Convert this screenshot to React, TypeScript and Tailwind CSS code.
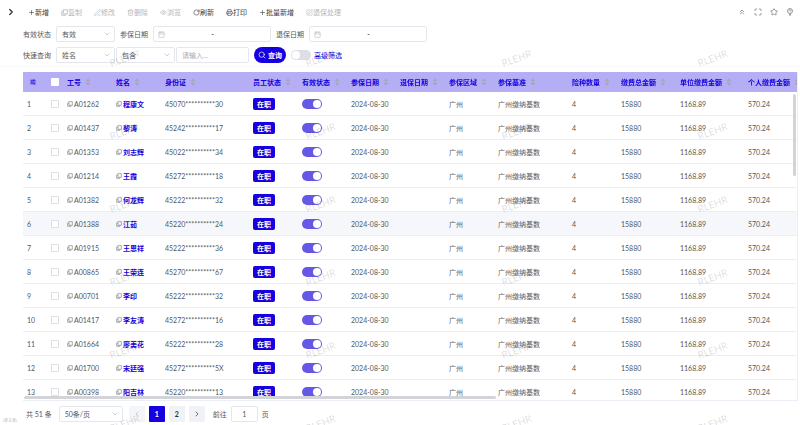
import type { ComponentType } from "react";
import {
  ChevronRight,
  ChevronLeft,
  ChevronDown,
  ChevronsUp,
  Plus,
  Trash2,
  Eye,
  RotateCw,
  Printer,
  SquarePen,
  PenLine,
  Search,
  Star,
  Calendar,
  Maximize,
  SlidersHorizontal,
} from "lucide-react";

type IconProps = { className?: string; strokeWidth?: number };

// overlapping squares, used in the toolbar and in the cells
function CopyIcon({ className }: IconProps) {
  return (
    <svg viewBox="0 0 14 14" fill="none" stroke="currentColor" strokeWidth="1.6" className={className}>
      <path d="M4.5 1.5h8v8.5h-8z" />
      <path d="M4.5 4.5h-3v8h7.5v-2.5" />
    </svg>
  );
}

// round bulb with a question mark on a short stem
function GuideIcon({ className }: IconProps) {
  return (
    <svg viewBox="0 0 16 16" fill="none" stroke="currentColor" strokeWidth="1.4" className={className}>
      <circle cx="8" cy="6" r="5" />
      <path d="M6.5 5a1.5 1.5 0 1 1 2.2 1.4c-.5.3-.7.6-.7 1.1M8 11v4.5M6.5 13.5h3" />
    </svg>
  );
}

const actions: { icon: ComponentType<IconProps>; label: string; disabled?: boolean }[] = [
  { icon: Plus, label: "新增" },
  { icon: CopyIcon, label: "复制", disabled: true },
  { icon: PenLine, label: "修改", disabled: true },
  { icon: Trash2, label: "删除", disabled: true },
  { icon: Eye, label: "浏览", disabled: true },
  { icon: RotateCw, label: "刷新" },
  { icon: Printer, label: "打印" },
  { icon: Plus, label: "批量新增" },
  { icon: SquarePen, label: "退保处理", disabled: true },
];

const tools = [
  { icon: ChevronsUp, label: "收起" },
  { icon: Maximize, label: "全屏" },
  { icon: Star, label: "收藏" },
  { icon: GuideIcon, label: "帮助" },
];

const columns = [
  { title: "工号", width: "w-[49px]" },
  { title: "姓名", width: "w-[49px]" },
  { title: "身份证", width: "w-[88px]" },
  { title: "员工状态", width: "w-[49px]" },
  { title: "有效状态", width: "w-[49px]" },
  { title: "参保日期", width: "w-[49px]" },
  { title: "退保日期", width: "w-[49px]" },
  { title: "参保区域", width: "w-[49px]" },
  { title: "参保基准", width: "w-[74px]" },
  { title: "险种数量", width: "w-[49px]" },
  { title: "缴费总金额", width: "w-[59px]" },
  { title: "单位缴费金额", width: "w-[68px]" },
  { title: "个人缴费金额", width: "w-[68px]" },
];

const employees = [
  { code: "A01262", name: "程康文", idCard: "45070**********30" },
  { code: "A01437", name: "黎涛", idCard: "45242**********17" },
  { code: "A01353", name: "刘志辉", idCard: "45022**********34" },
  { code: "A01214", name: "王霞", idCard: "45272**********18" },
  { code: "A01382", name: "何龙辉", idCard: "45222**********32" },
  { code: "A01388", name: "江茹", idCard: "45220**********24" },
  { code: "A01915", name: "王恩祥", idCard: "45222**********36" },
  { code: "A00865", name: "王荣连", idCard: "45270**********67" },
  { code: "A00701", name: "李印", idCard: "45222**********32" },
  { code: "A01417", name: "李友涛", idCard: "45272**********16" },
  { code: "A01664", name: "廖美花", idCard: "45222**********28" },
  { code: "A01700", name: "宋廷强", idCard: "45272**********5X" },
  { code: "A00398", name: "阳吉林", idCard: "45220**********13" },
];

function SelectBox({ id, label, value, width }: { id: string; label?: string; value: string; width: string }) {
  return (
    <div className={`relative h-4 ${width}`}>
      <select
        id={id}
        aria-label={label}
        defaultValue={value}
        className="block h-4 w-full appearance-none rounded-xs border border-[#e4e7ed] bg-white pl-[5px] text-[#55575c]"
      >
        <option>{value}</option>
      </select>
      <ChevronDown className="pointer-events-none absolute top-1 right-1 size-2 text-[#b4b8bf]" strokeWidth={2} />
    </div>
  );
}

function DateRange({ id, label }: { id: string; label: string }) {
  return (
    <div className="flex h-4 w-[118px] items-center rounded-xs border border-[#e4e7ed] bg-white px-1">
      <Calendar className="size-[7px] shrink-0 text-[#b4b8bf]" strokeWidth={2} />
      <input id={id} aria-label={`${label}起`} className="w-0 flex-1 outline-none" />
      <span className="mr-[6px] font-bold">-</span>
      <input aria-label={`${label}止`} className="w-0 flex-1 outline-none" />
    </div>
  );
}

function SortIcon() {
  return (
    <svg viewBox="0 0 6 8" className="h-2 w-[6px] shrink-0 fill-[#a3a5b4]">
      <path d="M3 .4 5.4 3.3H.6zM3 7.6.6 4.7h4.8z" />
    </svg>
  );
}

function Watermark() {
  return (
    <div
      aria-hidden="true"
      className="pointer-events-none absolute inset-0 grid auto-rows-[73px] grid-cols-[repeat(auto-fill,40px)] gap-x-[156px] overflow-hidden pt-[21px] pl-[105px]"
    >
      {Array.from({ length: 24 }, (_, i) => (
        <span key={i} className="grid place-items-center">
          <span className="-rotate-[20deg] text-[10px] text-black/15">RLEHR</span>
        </span>
      ))}
    </div>
  );
}

function Row({ index, code, name, idCard }: { index: number; code: string; name: string; idCard: string }) {
  return (
    <tr className={`h-6 ${index === 6 ? "bg-[#f5f7fa]" : "bg-white"} [&>td]:border-b [&>td]:border-[#ebeef5] [&>td]:px-1`}>
      <td>{index}</td>
      <td>
        <input
          type="checkbox"
          aria-label={`选择 ${name}`}
          className="block size-2 appearance-none rounded-[1px] border border-[#dcdfe6] bg-white"
        />
      </td>
      <td>
        <span className="flex items-center gap-px">
          <CopyIcon className="size-[6px] shrink-0 text-[#85878c]" />
          {code}
        </span>
      </td>
      <td>
        <a href="#" className="flex items-center gap-px font-bold text-[#1500e0]">
          <CopyIcon className="size-[6px] shrink-0 text-[#85878c]" />
          {name}
        </a>
      </td>
      <td>{idCard}</td>
      <td>
        <span className="flex h-3 w-[22px] items-center justify-center rounded-xs bg-[#1500e0] font-bold text-white">
          在职
        </span>
      </td>
      <td>
        <input
          type="checkbox"
          role="switch"
          defaultChecked
          aria-label={`${name} 有效状态`}
          className="flex h-[10px] w-5 appearance-none items-center justify-end rounded-full bg-[#6757e6] px-px after:size-2 after:rounded-full after:bg-white"
        />
      </td>
      <td>2024-08-30</td>
      <td></td>
      <td>广州</td>
      <td>广州缴纳基数</td>
      <td>4</td>
      <td>15880</td>
      <td>1168.89</td>
      <td>570.24</td>
    </tr>
  );
}

export default function App() {
  return (
    <div className="relative flex h-screen flex-col overflow-hidden bg-white font-['Lato','Noto_Sans_CJK_SC',sans-serif] text-[7px] leading-[10px] text-[#55575c]">
      <header className="flex h-6 shrink-0 items-center px-[6px]">
        <button aria-label="展开" className="mr-3">
          <ChevronRight className="size-[10px] text-[#303133]" strokeWidth={3} />
        </button>
        <nav className="flex items-center gap-3">
          {actions.map((item) => (
            <button
              key={item.label}
              disabled={item.disabled}
              className="flex items-center text-[#3c3e42] disabled:text-[#b4b6ba]"
            >
              <item.icon className="size-[7px]" strokeWidth={2} />
              {item.label}
            </button>
          ))}
        </nav>
        <div className="ml-auto flex items-center gap-2 text-[#6b6d72]">
          {tools.map((item) => (
            <button key={item.label} aria-label={item.label}>
              <item.icon className="size-2" strokeWidth={2} />
            </button>
          ))}
        </div>
      </header>

      <section className="mb-[5px] flex shrink-0 flex-col gap-[5px] border-b border-[#f8f8fa] pt-[2px] pb-[3px] pl-[23px]">
        <div className="flex items-center gap-[5px]">
          <label htmlFor="status">有效状态</label>
          <SelectBox id="status" value="有效" width="w-[59px]" />
          <label htmlFor="join-date">参保日期</label>
          <DateRange id="join-date" label="参保日期" />
          <label htmlFor="quit-date">退保日期</label>
          <DateRange id="quit-date" label="退保日期" />
        </div>
        <div className="flex items-center gap-[5px]">
          <label htmlFor="field">快速查询</label>
          <div className="flex gap-px">
            <SelectBox id="field" value="姓名" width="w-[59px]" />
            <SelectBox id="operator" label="条件" value="包含" width="w-[59px]" />
            <input
              aria-label="关键字"
              placeholder="请输入..."
              className="h-4 w-[73px] rounded-xs border border-[#e4e7ed] bg-white px-[5px] outline-none placeholder:text-[#a8abb2]"
            />
          </div>
          <button className="flex h-4 items-center gap-[2px] rounded-full bg-[#1500e0] px-1 font-bold text-white">
            <Search className="size-2" strokeWidth={2} />
            查询
          </button>
          <label className="flex items-center gap-[3px] text-[#1500e0]">
            <input
              type="checkbox"
              role="switch"
              className="flex h-[10px] w-5 appearance-none items-center rounded-full bg-[#dcdfe6] px-px after:size-2 after:rounded-full after:bg-white"
            />
            高级筛选
          </label>
        </div>
      </section>

      <main className="relative mr-[2px] ml-[23px] min-h-0 flex-1 border-r border-b border-[#ebeef5]">
        <div className="h-full overflow-auto [scrollbar-width:none]">
          <table className="w-full min-w-[789px] table-fixed border-separate border-spacing-0 text-left whitespace-nowrap">
            <thead className="sticky top-0 z-10">
              <tr className="h-5 bg-[#b5aef5] text-[#1500e0] [&>th]:px-1">
                <th className="w-6">
                  <SlidersHorizontal className="ml-[3px] size-[6px]" strokeWidth={3} />
                </th>
                <th className="w-4">
                  <input
                    type="checkbox"
                    aria-label="全选"
                    className="block size-2 appearance-none rounded-[1px] bg-white"
                  />
                </th>
                {columns.map((col) => (
                  <th key={col.title} className={col.width}>
                    <span className="flex items-center gap-1">
                      {col.title}
                      <SortIcon />
                    </span>
                  </th>
                ))}
              </tr>
            </thead>
            <tbody>
              {employees.map((item, i) => (
                <Row key={item.code} index={i + 1} {...item} />
              ))}
            </tbody>
          </table>
        </div>
        {/* scroll thumbs */}
        <div className="absolute top-[22px] right-px h-1/4 w-[3px] rounded-full bg-[#d3d4d8]" />
        <div className="absolute bottom-px left-px h-[3px] w-[61%] rounded-full bg-[#d3d4d8]" />
      </main>

      <footer className="relative flex h-6 shrink-0 items-center pt-px pl-[26px]">
        <span>共 51 条</span>
        <div className="mr-[6px] ml-[7px]">
          <SelectBox id="page-size" label="每页条数" value="50条/页" width="w-[64px]" />
        </div>
        <div className="flex gap-1 font-bold text-[#303133]">
          <button aria-label="上一页" disabled className="grid size-4 place-items-center rounded-[1px] bg-[#f4f5f8] text-[#b4b8bf]">
            <ChevronLeft className="size-2" strokeWidth={2} />
          </button>
          <button className="size-4 rounded-[1px] bg-[#1500e0] text-white">1</button>
          <button className="size-4 rounded-[1px] bg-[#f0f2f5]">2</button>
          <button aria-label="下一页" className="grid size-4 place-items-center rounded-[1px] bg-[#f0f2f5]">
            <ChevronRight className="size-2" strokeWidth={2} />
          </button>
        </div>
        <label className="ml-2 flex items-center gap-1">
          前往
          <input
            defaultValue="1"
            className="h-4 w-[27px] rounded-xs border border-[#e4e7ed] bg-white text-center outline-none"
          />
          页
        </label>
        <small className="absolute bottom-px left-[3px] text-[4px] leading-[6px] text-[#b8babf]">(单主表)</small>
      </footer>

      <Watermark />
    </div>
  );
}
